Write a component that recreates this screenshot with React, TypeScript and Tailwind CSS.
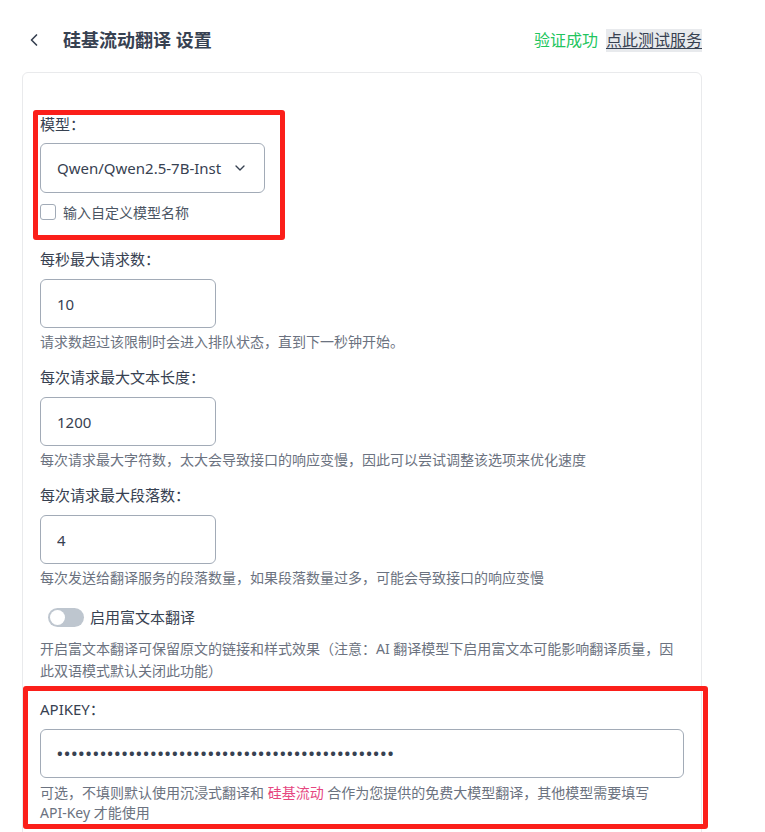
import React from 'react';
import { ChevronLeft, ChevronDown } from 'lucide-react';

const font = { fontFamily: '"Noto Sans", "Noto Sans CJK SC", sans-serif' };

function Field({ label, value, hint }: { label: string; value: string; hint: string }) {
  return (
    <div className="flex flex-col">
      <label className="text-[15px] leading-6 text-[#374151]">{label}</label>
      <input
        readOnly
        value={value}
        className="mt-2 h-[49px] w-[176px] rounded-md border border-[#a2abb7] px-4 text-[15px] text-[#374151] outline-none"
      />
      <p className="mt-1 text-[14px] leading-5 text-[#6b7280]">{hint}</p>
    </div>
  );
}

export default function App() {
  return (
    <div className="relative min-h-screen bg-white px-[22px] pt-[28px]" style={font}>
      {/* header */}
      <div className="flex h-6 w-[680px] items-center justify-between">
        <div className="flex items-center">
          <ChevronLeft className="ml-[2px] h-5 w-5 text-[#374151]" strokeWidth={2} />
          <h1 className="ml-[19px] text-[18px] font-bold text-[#374151]">硅基流动翻译 设置</h1>
        </div>
        <div className="flex items-center gap-2 text-[16px]">
          <span className="text-[#22c55e]">验证成功</span>
          <button className="bg-[#e8eaed] leading-[23px] text-[#374151] underline underline-offset-2">
            点此测试服务
          </button>
        </div>
      </div>

      {/* card */}
      <div className="mt-5 w-[680px] rounded-md border border-[#e9eaec] px-[17px] pt-[39px] pb-8">
        <div className="flex flex-col">
          <label className="text-[15px] leading-6 text-[#374151]">模型：</label>
          <div className="mt-[7px] flex h-[50px] w-[225px] items-center justify-between rounded-md border border-[#a2abb7] pl-4 pr-4">
            <span className="text-[15px] text-[#374151]">Qwen/Qwen2.5-7B-Inst</span>
            <ChevronDown className="h-4 w-4 text-[#374151]" strokeWidth={2} />
          </div>
          <div className="mt-[9px] flex h-5 items-center gap-[7px]">
            <span className="h-4 w-4 rounded-[3px] border border-[#a2abb7]" />
            <span className="text-[14px] text-[#4b5563]">输入自定义模型名称</span>
          </div>
        </div>

        <div className="mt-[25px] flex flex-col gap-[13px]">
          <Field label="每秒最大请求数：" value="10" hint="请求数超过该限制时会进入排队状态，直到下一秒钟开始。" />
          <Field
            label="每次请求最大文本长度："
            value="1200"
            hint="每次请求最大字符数，太大会导致接口的响应变慢，因此可以尝试调整该选项来优化速度"
          />
          <Field
            label="每次请求最大段落数："
            value="4"
            hint="每次发送给翻译服务的段落数量，如果段落数量过多，可能会导致接口的响应变慢"
          />
        </div>

        <div className="mt-[17px] flex h-6 items-center pl-2">
          <span className="flex h-[19px] w-9 items-center rounded-full bg-[#bec6cf] px-[2px]">
            <span className="h-[15px] w-[15px] rounded-full bg-white" />
          </span>
          <span className="ml-[6px] text-[15px] text-[#374151]">启用富文本翻译</span>
        </div>
        <p className="mt-[9px] text-[14px] leading-[22px] text-[#6b7280]">
          开启富文本翻译可保留原文的链接和样式效果（注意：AI 翻译模型下启用富文本可能影响翻译质量，因此双语模式默认关闭此功能）
        </p>

        <div className="mt-[15px] flex flex-col">
          <label className="text-[15px] leading-6 text-[#374151]">APIKEY：</label>
          <div className="mt-2 flex h-[49px] w-full items-center rounded-md border border-[#a2abb7] px-4">
            <span className="text-[15px] font-bold tracking-[1.55px] text-[#374151]">
              {'•'.repeat(47)}
            </span>
          </div>
          <p className="mt-[5px] text-[14px] leading-5 text-[#6b7280]">
            可选，不填则默认使用沉浸式翻译和 <span className="text-[#e6467f]">硅基流动</span> 合作为您提供的免费大模型翻译，其他模型需要填写
            <br />
            API-Key 才能使用
          </p>
        </div>
      </div>

      {/* annotation boxes */}
      <div className="pointer-events-none absolute left-[33px] top-[110px] h-[130px] w-[252px] rounded-[3px] border-[5px] border-[#fb1f1a]" />
      <div className="pointer-events-none absolute left-[23px] top-[686px] h-[143px] w-[685px] rounded-[3px] border-[5px] border-[#fb1f1a]" />
    </div>
  );
}
